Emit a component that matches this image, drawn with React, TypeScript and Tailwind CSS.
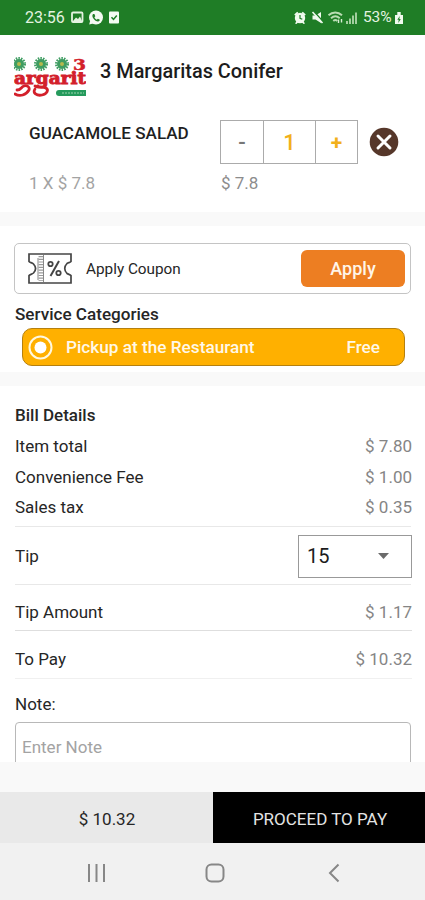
import { useState } from "react";

const bill = [
  { label: "Item total", value: "$ 7.80" },
  { label: "Convenience Fee", value: "$ 1.00" },
  { label: "Sales tax", value: "$ 0.35" },
];

const StatusBar = () => (
  <div className="flex h-[35px] items-center justify-between bg-[#1f7d26] pl-[25px] pr-[22px] pt-px text-[#e4f3e0]">
    <div className="flex items-center">
      <span className="w-[39px] whitespace-nowrap text-[16px] leading-none">23:56</span>
      <svg width="50" height="16" viewBox="0 0 50 16" className="ml-[7px]">
        <rect x="1" y="2.500" width="10.500" height="9.500" rx="1" fill="none" stroke="currentColor" strokeWidth="1.800" />
        <path d="M2 11l3-3.500 2 1.500 2-2.500 2 4.500z" fill="currentColor" />
        <circle cx="25" cy="7.500" r="7" fill="#f4fbf2" />
        <path d="M18.200 14.500l1-4 3 3z" fill="#f4fbf2" />
        <path d="M22.200 3.900c-1.200.9-1 2.700.2 4.500 1.400 2 3.400 3.300 5 3 .9-.2 1.500-1 1.400-1.600l-1.900-1.100-1.100 1c-1.100-.5-2-1.400-2.400-2.500l.9-1-.9-2.200z" fill="#1f7d26" />
        <rect x="38" y="1.500" width="10" height="12" rx="1" fill="#f4fbf2" />
        <path d="M40.500 7.200l2 2.200 3.300-4" fill="none" stroke="#1f7d26" strokeWidth="1.500" />
      </svg>
    </div>
    <div className="flex items-center">
      <svg width="66" height="16" viewBox="0 0 66 16">
        <g fill="#f0faee">
          <circle cx="6" cy="8" r="5.200" />
          <path d="M.2 4.500l3-2.700 1.300 1.300-3 2.700zM11.800 4.500l-3-2.700-1.300 1.300 3 2.700zM1 13.500l2-3 1.500 1.500-2 2zM11 13.500l-2-3-1.500 1.500 2 2z" />
        </g>
        <path d="M6 5v3.300l2.300 1" fill="none" stroke="#1f7d26" strokeWidth="1.200" />
        <path d="M18.500 5.500h3L27 2v11l-5.500-3.500h-3z" fill="#f0faee" />
        <path d="M18.500 0l11 12" stroke="#1f7d26" strokeWidth="1.500" />
        <path d="M18.500 2l10 11" stroke="#f0faee" strokeWidth="1.600" />
        <g fill="none" stroke="#b9dcb3" strokeWidth="1.900">
          <path d="M34.500 5.200c4-3.700 9.500-3.700 13.500 0" />
          <path d="M37 8.200c2.700-2.400 6-2.400 8.700 0" />
          <path d="M39.300 11c1.300-1.200 2.800-1.200 4 0" />
        </g>
        <path d="M44.500 9.500v3.500M47.500 9v3.500" stroke="#d8eed4" strokeWidth="1.400" />
        <path d="M53 11v3M56 8.500V14M59 5.500V14M62 2.500V14" stroke="#b9dcb3" strokeWidth="1.700" />
      </svg>
      <span className="ml-[3px] w-[31px] whitespace-nowrap text-[15.500px] leading-none tracking-[-0.100px]">53%</span>
      <svg width="8" height="12" viewBox="0 0 8 12" className="ml-[1px]">
        <path d="M2.300 0h3.400v3H8v9H0V3h2.300z" fill="#f0faee" />
        <path d="M4.800 4L2.300 7.800h1.400L3.300 11l2.500-4H4.300z" fill="#1f7d26" />
      </svg>
    </div>
  </div>
);

const Flower = ({ cx, cy }: { cx: number; cy: number }) => (
  <g>
    <circle cx={cx} cy={cy} r="5" fill="#3f9d62" />
    <circle cx={cx} cy={cy} r="5.800" fill="none" stroke="#3f9d62" strokeWidth="2.400" strokeDasharray="1.500 1.100" />
    <circle cx={cx} cy={cy} r="2" fill="#b5b94d" />
  </g>
);

const Logo = () => (
  <svg width="72" height="43" viewBox="0 0 72 43" className="shrink-0 overflow-hidden">
    <Flower cx={5} cy={8} />
    <Flower cx={27} cy={8} />
    <Flower cx={48} cy={8} />
    <g fill="#d3202b" stroke="#d3202b" fontFamily="DejaVu Serif, serif" fontWeight="700">
      <text x="59" y="13.500" fontSize="15" strokeWidth="0.500" textLength="13" lengthAdjust="spacingAndGlyphs">3</text>
      <text x="0" y="28" fontSize="17" strokeWidth="0.900" textLength="72" lengthAdjust="spacingAndGlyphs">argarit</text>
    </g>
    <g fill="none" stroke="#d3202b" strokeWidth="2.800" strokeLinecap="round">
      <path d="M1 38c5 3 11 1 14-4 1-3-2-5-5-4s-3 4-7 4" />
      <path d="M21 33c-3 4 2 7 7 6s7-5 4-7-8 0-11-2" />
    </g>
    <rect x="42" y="34" width="36" height="6" rx="3" fill="#259a5c" />
    <path d="M48 37h22" stroke="#74c193" strokeWidth="1.300" strokeDasharray="2 1" />
  </svg>
);

const CouponIcon = () => (
  <svg width="44" height="31" viewBox="0 0 44 31" fill="none" stroke="#454545" strokeWidth="1.700">
    <path d="M1 1h42v7.500c-1 1.200-2.500 1-4 2-3 3-3 7 0 10 1.500 1 3 .8 4 2V30H1v-7.500c1-1.200 3-1 4.500-2.500 2.500-2.700 2.500-6.300 0-9C4 9.500 2 9.700 1 8.500z" />
    <path d="M10 5v22M15.500 2v27" stroke="#888" strokeWidth="1" />
    <path d="M12.800 3v25" stroke="#999" strokeWidth="4.500" strokeDasharray="1.200 1.500" />
    <circle cx="22.500" cy="11" r="2.200" strokeWidth="1.800" />
    <circle cx="30.500" cy="20" r="2.200" strokeWidth="1.800" />
    <path d="M31 8l-8.500 15" strokeWidth="2" />
  </svg>
);

export default function App() {
  const [qty, setQty] = useState(1);

  return (
    <div className="flex h-[900px] w-[425px] flex-col overflow-hidden bg-[#f9f9f9] font-[Roboto,sans-serif] text-[17px] leading-5 text-[#262626]">
      <StatusBar />

      <div className="h-[177px] shrink-0 bg-white">
        <div className="flex h-[72px] items-start pl-[14px] pt-[21px]">
          <Logo />
          <h1 className="ml-[14px] mt-[6px] text-[19.900px] font-medium leading-5 text-[#1c1c1c]">3 Margaritas Conifer</h1>
        </div>
        <div className="flex pl-[29px] pt-[13px]">
          <div className="w-[191px]">
            <div className="mt-[3px] text-[17.100px] font-medium text-[#1f1f1f]">GUACAMOLE SALAD</div>
            <div className="mt-[30px] text-[#a3a3a3]">1 X $ 7.8</div>
          </div>
          <div>
            <div className="flex h-[44px] w-[138px] border border-[#ababab]">
              <button className="w-[42px] pt-[2px] text-[22px] font-medium text-[#777]" onClick={() => setQty(Math.max(1, qty - 1))}>-</button>
              <div className="flex w-[53px] items-center justify-center border-x border-[#ababab] pt-[2px] text-[22px] font-medium text-[#f2b01c]">{qty}</div>
              <button className="flex-1 pt-[2px] text-[21px] font-bold text-[#f2b01c]" onClick={() => setQty(qty + 1)}>+</button>
            </div>
            <div className="mt-[9px] pl-px text-[#8c8c8c]">$ 7.8</div>
          </div>
          <svg width="30" height="30" viewBox="0 0 30 30" className="ml-[11px] mt-[7px]">
            <circle cx="15" cy="15" r="14.300" fill="#56372a" />
            <path d="M9 9l12 12M21 9L9 21" stroke="#fff" strokeWidth="3" strokeLinecap="round" />
          </svg>
        </div>
      </div>

      <div className="mt-[14px] h-[146px] shrink-0 bg-white px-[14px] pt-[17px]">
        <div className="flex h-[51px] items-center rounded-[5px] border-[1.500px] border-[#c4c4c4] pl-[13px] pr-[5px]">
          <CouponIcon />
          <span className="ml-[14px] text-[15.300px]">Apply Coupon</span>
          <button className="ml-auto h-[37px] w-[104px] rounded-[6px] bg-[#ed7e22] text-[18px] font-medium text-[#fff5e8]">Apply</button>
        </div>
        <h2 className="mt-[10px] pl-px text-[17.100px] font-medium">Service Categories</h2>
        <div className="ml-[8px] mr-[6px] mt-[4px] flex h-[38px] items-center rounded-[10px] border border-[#b5800f] bg-[#ffb000] pl-[5px] pr-[24px] text-[17.200px] font-medium text-[#fff8e8]">
          <svg width="25" height="25" viewBox="0 0 25 25">
            <circle cx="12.500" cy="12.500" r="11" fill="none" stroke="#fff8e0" strokeWidth="2" />
            <circle cx="12.500" cy="12.500" r="6" fill="#fff" />
          </svg>
          <span className="ml-[13px]">Pickup at the Restaurant</span>
          <span className="ml-auto">Free</span>
        </div>
      </div>

      <div className="mt-[14px] h-[376px] shrink-0 overflow-hidden bg-white pl-[15px] pr-[14px] pt-[19px]">
        <h2 className="mb-[11px] font-medium">Bill Details</h2>
        <div className="flex flex-col gap-[10.500px]">
          {bill.map((row) => (
            <div key={row.label} className="-mr-px flex justify-between">
              <span>{row.label}</span>
              <span className="text-[#858585]">{row.value}</span>
            </div>
          ))}
        </div>
        <div className="mt-[9px] flex h-[59px] items-center justify-between border-y border-[#e8e8e8] pt-px">
          <span>Tip</span>
          <div className="-mr-px flex h-[43px] w-[114px] items-center justify-between border border-[#999] pl-[8px] pr-[22px] text-[20px] text-[#1c1c1c]">
            15
            <svg width="11" height="6" viewBox="0 0 11 6">
              <path d="M0 0h11L5.500 6z" fill="#6b6b6b" />
            </svg>
          </div>
        </div>
        <div className="-mr-px flex h-[46px] items-center justify-between border-b border-[#dedede] pt-[8px]">
          <span>Tip Amount</span>
          <span className="text-[#858585]">$ 1.17</span>
        </div>
        <div className="-mr-px flex h-[48px] items-center justify-between border-b border-[#f0f0f0] pt-[9px]">
          <span>To Pay</span>
          <span className="text-[#858585]">$ 10.32</span>
        </div>
        <div className="mt-[15px]">Note:</div>
        <div className="mt-[8px] h-[80px] rounded-[4px] border-[1.500px] border-[#b8b8b8] px-[6px] pt-[14px] text-[#a3a3a3]">Enter Note</div>
      </div>

      <div className="mt-[30px] flex h-[51px] shrink-0">
        <div className="flex w-[213px] items-center justify-center bg-[#e9e9e9] pl-px pt-[2px]">$ 10.32</div>
        <button className="flex-1 bg-black pl-[2px] pt-[2px] text-[#e4e4e4]">PROCEED TO PAY</button>
      </div>

      <div className="flex h-[57px] shrink-0 items-center bg-[#f1f1f1] pl-[86px] pt-[2px] text-[#878787]">
        <svg width="255" height="20" viewBox="0 0 255 20" fill="none" stroke="currentColor" strokeWidth="2">
          <path d="M3 1v18M10.500 1v18M18 1v18" />
          <rect x="120.500" y="1.500" width="17" height="17" rx="5" />
          <path d="M252.500 1.500L244 10l8.500 8.500" />
        </svg>
      </div>
    </div>
  );
}
